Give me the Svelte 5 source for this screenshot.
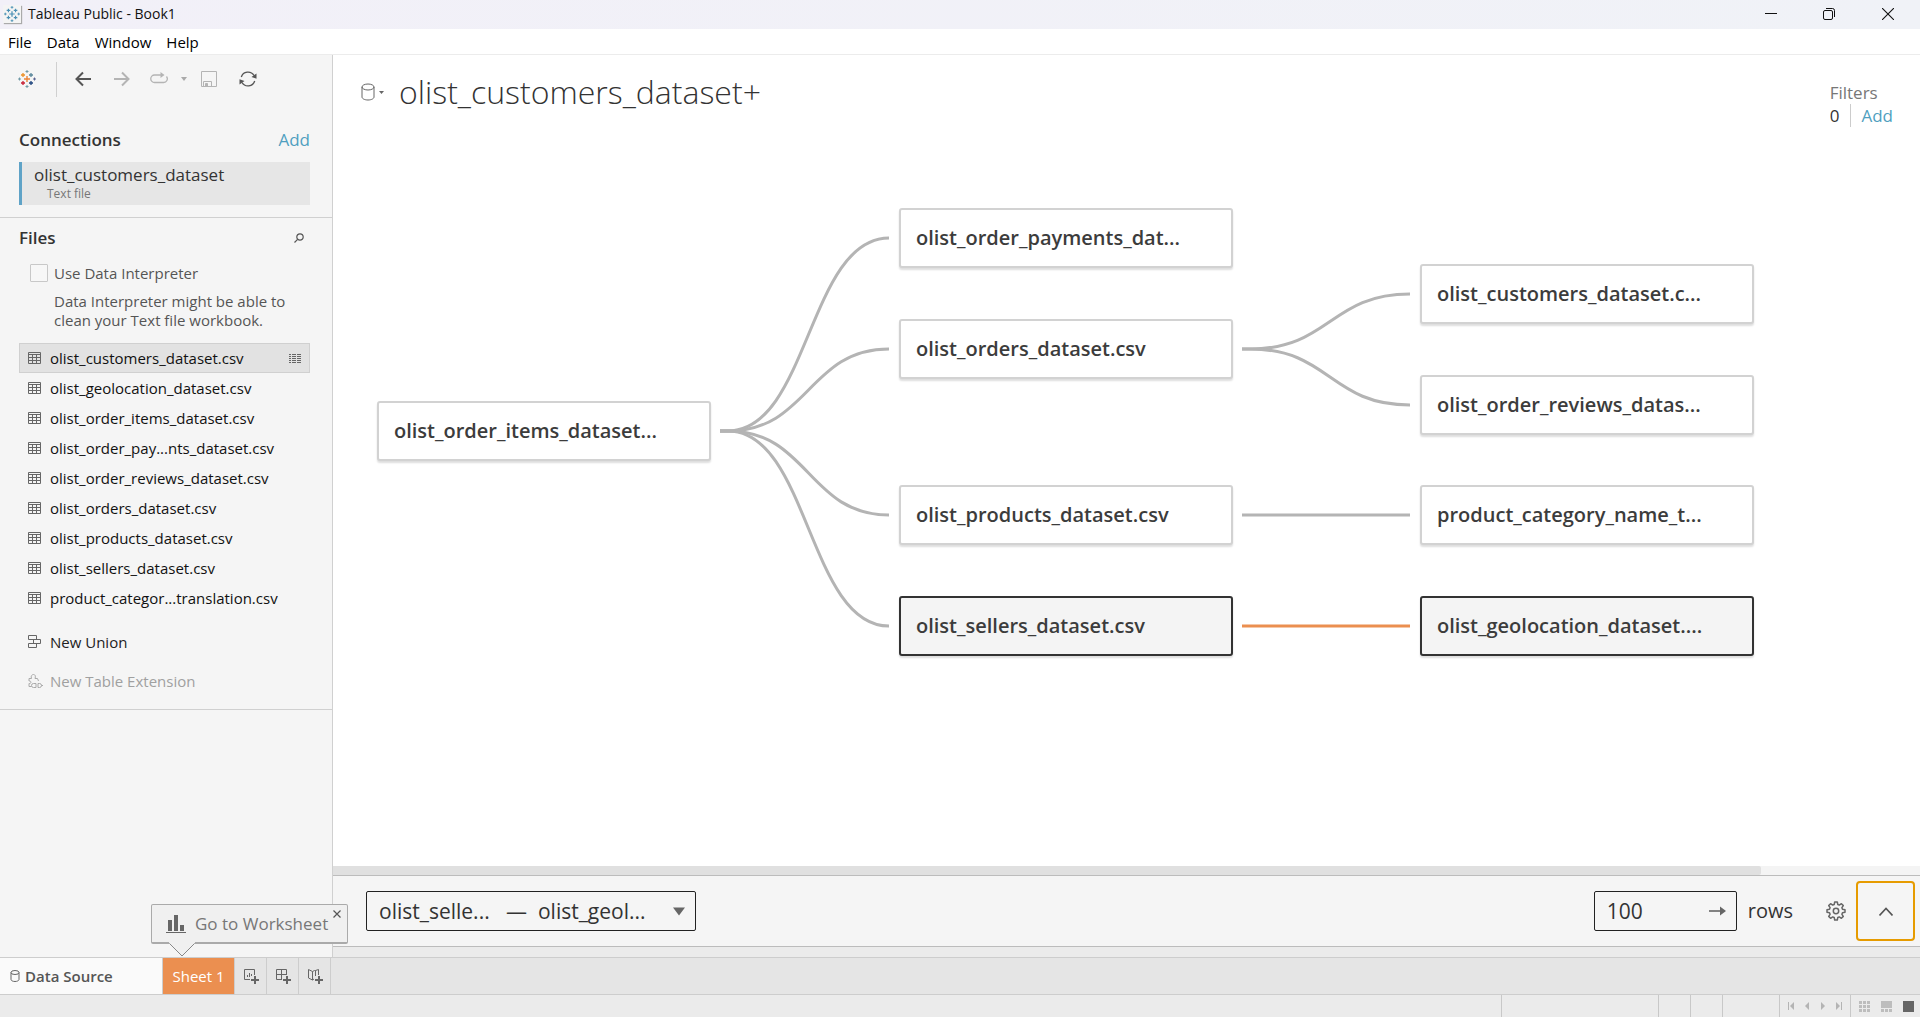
<script>
  const files = [
    'olist_customers_dataset.csv',
    'olist_geolocation_dataset.csv',
    'olist_order_items_dataset.csv',
    'olist_order_pay...nts_dataset.csv',
    'olist_order_reviews_dataset.csv',
    'olist_orders_dataset.csv',
    'olist_products_dataset.csv',
    'olist_sellers_dataset.csv',
    'product_categor...translation.csv'
  ];

  // Node positions on the relationship canvas; every node is 334 x 60.
  const W = 334;
  const H = 60;
  const nodes = [
    { id: 'items', label: 'olist_order_items_dataset...', x: 44, y: 261 },
    { id: 'payments', label: 'olist_order_payments_dat...', x: 566, y: 68 },
    { id: 'orders', label: 'olist_orders_dataset.csv', x: 566, y: 179 },
    { id: 'products', label: 'olist_products_dataset.csv', x: 566, y: 345 },
    { id: 'sellers', label: 'olist_sellers_dataset.csv', x: 566, y: 456, selected: true },
    { id: 'customers', label: 'olist_customers_dataset.c...', x: 1087, y: 124 },
    { id: 'reviews', label: 'olist_order_reviews_datas...', x: 1087, y: 235 },
    { id: 'category', label: 'product_category_name_t...', x: 1087, y: 345 },
    { id: 'geo', label: 'olist_geolocation_dataset....', x: 1087, y: 456, selected: true }
  ];
  const links = [
    ['items', 'payments'],
    ['items', 'orders'],
    ['items', 'products'],
    ['items', 'sellers'],
    ['orders', 'customers'],
    ['orders', 'reviews'],
    ['products', 'category'],
    ['sellers', 'geo', true]
  ];
  const find = (id) => nodes.find((n) => n.id === id);
  function curve(from, to) {
    const a = find(from);
    const b = find(to);
    const x1 = a.x + W + 9;
    const y1 = a.y + H / 2;
    const x2 = b.x - 10;
    const y2 = b.y + H / 2;
    const mid = (x1 + 8 + x2) / 2;
    return `M${x1} ${y1}H${x1 + 8}C${mid} ${y1} ${mid} ${y2} ${x2} ${y2}`;
  }
  let rows = $state('100');
  let interpreter = $state(false);
</script>

{#snippet logo(mono)}
  <svg class="logo" class:mono width="18" height="18" viewBox="0 0 18 18" fill="none" aria-hidden="true">
    <path d="M9 6v6M6 9h6" stroke="#eb8438" stroke-width="1.4" />
    <path d="M5 3v4M3 5h4" stroke="#eb9129" stroke-width="1.3" />
    <path d="M13 3v4M11 5h4" stroke="#59879b" stroke-width="1.3" />
    <path d="M5 11v4M3 13h4" stroke="#c72035" stroke-width="1.3" />
    <path d="M13 11v4M11 13h4" stroke="#1f457e" stroke-width="1.3" />
    <path d="M9 0v3M7.500 1.500h3M9 15v3M7.500 16.500h3" stroke="#7199a6" />
    <path d="M1.500 7.500v3M0 9h3" stroke="#7199a6" />
    <path d="M16.500 7.500v3M15 9h3" stroke="#5b6591" />
  </svg>
{/snippet}

{#snippet plus()}
  <path d="M12 8v8M8 12h8" stroke="#666" stroke-width="2" />
{/snippet}

<div class="app">
  <header class="titlebar">
    <span class="app-icon">{@render logo(true)}</span>
    <span class="title">Tableau Public - Book1</span>
    <div class="window-buttons">
      <button aria-label="Minimize"><svg width="12" height="12" viewBox="0 0 12 12"><path d="M0 5.500h12" stroke="#111" /></svg></button>
      <button aria-label="Restore">
        <svg width="12" height="12" viewBox="0 0 12 12" fill="none" stroke="#111">
          <rect x=".5" y="2.500" width="9" height="9" rx="1.500" />
          <path d="M3 .5h6.500a2 2 0 0 1 2 2V9" />
        </svg>
      </button>
      <button aria-label="Close"><svg width="12" height="12" viewBox="0 0 12 12"><path d="M0 0l12 12M12 0L0 12" stroke="#111" stroke-width="1.100" /></svg></button>
    </div>
  </header>
  <nav class="menubar">
    <button>File</button>
    <button>Data</button>
    <button>Window</button>
    <button>Help</button>
  </nav>

  <div class="body">
    <aside>
      <div class="tools">
        <button class="start" aria-label="Start page">{@render logo(false)}</button>
        <span class="rule"></span>
        <button aria-label="Undo"><svg width="16" height="16" viewBox="0 0 16 16" fill="none" stroke="#555" stroke-width="2"><path d="M16 8H1.500M8 1.500L1.500 8 8 14.500" /></svg></button>
        <button aria-label="Redo"><svg width="16" height="16" viewBox="0 0 16 16" fill="none" stroke="#b4b4b4" stroke-width="2"><path d="M0 8h14.500M8 1.500L14.500 8 8 14.500" /></svg></button>
        <button class="replay" aria-label="Replay">
          <svg width="18" height="16" viewBox="0 0 18 16" fill="none" stroke="#b4b4b4" stroke-width="1.300"><path d="M11 4H4.500a3.700 3.700 0 0 0 0 7.500h9a3.700 3.700 0 0 0 3-6" /><path d="M10.500 1l4 3-4 3z" fill="#b4b4b4" stroke="none" /></svg>
        </button>
        <button class="more" aria-label="Replay options"><svg width="6" height="4" viewBox="0 0 6 4"><path d="M0 0h6L3 4z" fill="#aaa" /></svg></button>
        <button class="save" aria-label="Save">
          <svg width="16" height="16" viewBox="0 0 16 16" fill="none" stroke="#b4b4b4"><path d="M.5.5h15v15H.5zM2.500 15.500v-5h8v5" /><path d="M4.500 15.500v-3h2v3z" fill="#b4b4b4" /></svg>
        </button>
        <button class="refresh" aria-label="Refresh">
          <svg width="18" height="16" viewBox="0 0 18 16" fill="none" stroke="#555" stroke-width="1.300"><path d="M2.300 6A7 7 0 0 1 15 4.500M15.700 10A7 7 0 0 1 3 11.500" /><path d="M17.500 2.500v5.200l-5-1.700zM.5 13.500V8.300l5 1.700z" fill="#555" stroke="none" /></svg>
        </button>
      </div>

      <section class="connections">
        <div class="head"><h2>Connections</h2><a href="#add-connection">Add</a></div>
        <button class="connection"><span>olist_customers_dataset</span><small>Text file</small></button>
      </section>

      <section class="files">
        <div class="head">
          <h2>Files</h2>
          <button class="search" aria-label="Search files"><svg width="10" height="10" viewBox="0 0 10 10" fill="none" stroke="#555" stroke-width="1.200"><circle cx="6" cy="4" r="3.200" /><path d="M3.600 6.300L.5 9.500" /></svg></button>
        </div>
        <label class="interpreter"><input type="checkbox" bind:checked={interpreter} />Use Data Interpreter</label>
        <p>Data Interpreter might be able to clean your Text file workbook.</p>
        <ul>
          {#each files as file, i}
            <li>
              <button class="file" class:active={i === 0}>
                <svg width="13" height="12" viewBox="0 0 13 12" fill="none" stroke="#666"><path d="M.5.5h12v11H.5zM.5 2.500h12M.5 5.500h12M.5 8.500h12M4.500 2.500v9M8.500 2.500v9" /></svg>
                <span>{file}</span>
                {#if i === 0}
                  <svg class="details" width="12" height="9" viewBox="0 0 12 9" stroke="#666"><path d="M0 .5h12M0 2.500h12M0 4.500h12M0 6.500h12M0 8.500h12" stroke-dasharray="2 1 4 1 4 1" /></svg>
                {/if}
              </button>
            </li>
          {/each}
        </ul>
        <button class="extra">
          <svg width="15" height="14" viewBox="0 0 15 14" fill="none" stroke="#666"><path d="M.5.5h8v4h-8zM5.500 4.500h7v4h-7zM.5 8.500h8v4h-8z" /></svg>
          New Union
        </button>
        <button class="extra" disabled>
          <svg width="15" height="14" viewBox="0 0 15 14" fill="none" stroke="#aaa"><path d="M1 12.500V9.500c2.500.5 2.500-3 0-2.500V4.500h2.500C2.500 2 4 .5 5.500.5S8 2 7 4.500h2.500l1 2.500M1 12.500h2.500" /><path d="M5.500 9.500H8v4H5.500a2 2 0 0 1 0-4zM10 9.500h1.500a2 2 0 0 1 0 4H10zM13.500 11.500H15" /></svg>
          New Table Extension
        </button>
      </section>
    </aside>

    <main>
      <div class="main-head">
        <button class="source" aria-label="Data source options">
          <svg width="14" height="18" viewBox="0 0 14 18" fill="none" stroke="#666"><ellipse cx="7" cy="4" rx="6" ry="3" /><path d="M1 4v10c0 1.700 2.700 3 6 3s6-1.300 6-3V4" /></svg>
          <svg width="5" height="3" viewBox="0 0 5 3"><path d="M0 0h5L2.500 3z" fill="#666" /></svg>
        </button>
        <h1>olist_customers_dataset+</h1>
        <div class="filters">
          <span>Filters</span>
          <div><b>0</b><a href="#add-filter">Add</a></div>
        </div>
      </div>

      <div class="canvas">
        <svg class="links" fill="none" aria-hidden="true">
          {#each links as [from, to, on]}
            <path class:on d={curve(from, to)} />
          {/each}
        </svg>
        {#each nodes as n}
          <button class="node" class:selected={n.selected} style:left="{n.x}px" style:top="{n.y}px">{n.label}</button>
        {/each}
      </div>
      <div class="scroll"><div></div></div>

      <div class="databar">
        <div class="picker">
          <select aria-label="Relationship">
            <option>olist_selle... &nbsp; — &nbsp;olist_geol...</option>
          </select>
          <svg width="12" height="9" viewBox="0 0 12 9" aria-hidden="true"><path d="M0 .5h12L6 8.500z" fill="#666" /></svg>
        </div>
        <div class="rows">
          <input id="row-count" type="text" bind:value={rows} />
          <button aria-label="Load rows"><svg width="17" height="10" viewBox="0 0 17 10"><path d="M0 5h12" stroke="#666" stroke-width="1.600" /><path d="M11 .5L17 5l-6 4.500z" fill="#666" /></svg></button>
        </div>
        <label for="row-count">rows</label>
        <button class="gear" aria-label="Settings">
          <svg width="20" height="20" viewBox="0 0 20 20" fill="none" stroke="#666" stroke-width="1.500" stroke-linejoin="round">
            <path d="M8.700 1h2.600l.5 2.500 1.500.6 2.100-1.400 1.900 1.900-1.400 2.100.6 1.500 2.500.5v2.600l-2.500.5-.6 1.500 1.400 2.100-1.900 1.900-2.100-1.400-1.500.6-.5 2.500H8.700l-.5-2.500-1.500-.6-2.100 1.400-1.900-1.900 1.400-2.100-.6-1.500L1 11.300V8.700l2.500-.5.6-1.500-1.400-2.100 1.900-1.900 2.100 1.400 1.500-.6z" />
            <circle cx="10" cy="10" r="2.700" />
          </svg>
        </button>
        <button class="expand" aria-label="Show data"><svg width="14" height="9" viewBox="0 0 14 9" fill="none" stroke="#555" stroke-width="1.600"><path d="M.5 8.500L7 1.500l6.500 7" /></svg></button>
      </div>
      <div class="gutter"></div>
    </main>
  </div>

  <div class="tabs">
    <button class="data-source">
      <svg width="10" height="12" viewBox="0 0 10 12" fill="none" stroke="#666"><ellipse cx="5" cy="2.500" rx="4" ry="2" /><path d="M1 2.500v7c0 1 1.800 2 4 2s4-1 4-2v-7" /></svg>
      Data Source
    </button>
    <div class="sheet">
      <button class="sheet-tab">Sheet 1</button>
      <div class="callout">
        <button class="go">
          <svg width="20" height="18" viewBox="0 0 20 18" fill="#666" aria-hidden="true"><path d="M2 5h4v11H2zM8 0h4v16H8zM14 10h4v6h-4zM0 17h20v1H0z" /></svg>
          Go to Worksheet
        </button>
        <button class="dismiss" aria-label="Dismiss"><svg width="8" height="8" viewBox="0 0 8 8"><path d="M.5.5l7 7M7.500.5l-7 7" stroke="#555" stroke-width="1.200" /></svg></button>
        <svg class="tail" width="26" height="15" viewBox="0 0 26 15" aria-hidden="true"><path d="M0 0h26v1L13 14 0 1z" fill="#f0f0f0" /><path d="M.5 1.500L13 14 25.500 1.500" fill="none" stroke="#888" /></svg>
      </div>
    </div>
    <button class="new" aria-label="New worksheet"><svg width="16" height="16" viewBox="0 0 16 16" fill="none" stroke="#666"><path d="M7 11.500H1.500V1.500h10V7M4.500 9V7M6.500 9V5M8.500 8V6" />{@render plus()}</svg></button>
    <button class="new" aria-label="New dashboard"><svg width="16" height="16" viewBox="0 0 16 16" fill="none" stroke="#666"><path d="M7 11.500H1.500V1.500h10V7M1.500 6.500h10M6.500 1.500v10" />{@render plus()}</svg></button>
    <button class="new" aria-label="New story"><svg width="16" height="16" viewBox="0 0 16 16" fill="none" stroke="#666"><path d="M7 11l-1.500 1-4-2V1.500l4 2V12M5.500 3.500l2-1h1l3-1V7M8.500 2.500V8" />{@render plus()}</svg></button>
  </div>

  <footer>
    <span class="cell message"></span>
    <span class="cell info"></span>
    <span class="cell"></span>
    <span class="cell"></span>
    <span class="cell wide"></span>
    <div class="pager">
      <button aria-label="First"><svg width="8" height="8" viewBox="0 0 8 8" fill="#b4b4b4"><path d="M1 0h1v8H1zM7 0v8L3 4z" /></svg></button>
      <button aria-label="Previous"><svg width="8" height="8" viewBox="0 0 8 8" fill="#b4b4b4"><path d="M6 0v8L2 4z" /></svg></button>
      <button aria-label="Next"><svg width="8" height="8" viewBox="0 0 8 8" fill="#b4b4b4"><path d="M2 0v8l4-4z" /></svg></button>
      <button aria-label="Last"><svg width="8" height="8" viewBox="0 0 8 8" fill="#b4b4b4"><path d="M6 0h1v8H6zM1 0v8l4-4z" /></svg></button>
    </div>
    <div class="views">
      <button aria-label="Sheet sorter"><svg width="11" height="11" viewBox="0 0 11 11" fill="#bdbdbd"><path d="M0 0h3v3H0zM4 0h3v3H4zM8 0h3v3H8zM0 4h3v3H0zM4 4h3v3H4zM8 4h3v3H8zM0 8h3v3H0zM4 8h3v3H4zM8 8h3v3H8z" /></svg></button>
      <button aria-label="Filmstrip"><svg width="11" height="11" viewBox="0 0 11 11" fill="#bdbdbd"><path d="M0 0h11v7H0zM0 8h3v3H0zM4 8h3v3H4zM8 8h3v3H8z" /></svg></button>
      <button aria-label="Tabs"><svg width="11" height="11" viewBox="0 0 11 11" fill="#666"><path d="M0 0h11v11H0z" /></svg></button>
    </div>
  </footer>
</div>

<style>
  :global(body) {
    margin: 0;
  }
  .app {
    display: flex;
    flex-direction: column;
    height: 100vh;
    color: #333;
    background: #fff;
    font: 15px/20px 'Open Sans', 'Noto Sans', sans-serif;
  }
  * {
    box-sizing: border-box;
  }
  svg {
    display: block;
    flex: none;
  }
  button,
  input,
  select {
    margin: 0;
    padding: 0;
    border: 0;
    background: none;
    color: inherit;
    font: inherit;
    text-align: left;
  }
  a {
    color: #4f9fc0;
    text-decoration: none;
  }
  h1,
  h2,
  p,
  ul {
    margin: 0;
    padding: 0;
    list-style: none;
  }
  h2 {
    font-size: 17px;
    font-weight: 600;
  }

  .titlebar {
    display: flex;
    align-items: center;
    height: 29px;
    padding: 0 2px 1px 3px;
    background: linear-gradient(90deg, #f2f0f8, #f0f2f7);
    color: #111;
    font-size: 14px;
  }
  .app-icon {
    display: grid;
    place-items: center;
    width: 18px;
    height: 18px;
    margin-right: 7px;
    background: #f4f4f4;
    box-shadow: 1px 1px 1px #aaa;
  }
  .mono {
    width: 16px;
    height: 16px;
  }
  .mono path {
    stroke: #4a90b5;
  }
  .window-buttons {
    display: flex;
    margin-left: auto;
  }
  .window-buttons button {
    display: grid;
    place-items: center;
    width: 58px;
    height: 28px;
  }
  .window-buttons button:last-child {
    width: 60px;
  }
  .menubar {
    display: flex;
    gap: 15px;
    height: 26px;
    padding: 1px 8px 0;
    border-bottom: 1px solid #ececec;
    color: #000;
    font-size: 15px;
  }

  .body {
    display: flex;
    flex: 1;
    min-height: 0;
  }
  aside {
    flex: none;
    width: 333px;
    border-right: 1px solid #d0d0d0;
    background: #f5f5f5;
  }
  .tools {
    display: flex;
    align-items: center;
    height: 48px;
    padding-left: 18px;
  }
  .rule {
    width: 1px;
    height: 35px;
    margin: 0 18px 0 20px;
    background: #d0d0d0;
  }
  .tools .rule + button {
    margin-right: 23px;
  }
  .replay {
    margin: 0 13px 0 20px;
  }
  .save {
    margin: 0 22px 0 14px;
  }
  .head {
    display: flex;
    align-items: center;
    justify-content: space-between;
  }
  .head a {
    font-size: 17px;
  }
  .connections {
    padding: 27px 22px 12px 19px;
    border-bottom: 1px solid #d0d0d0;
  }
  .connection {
    display: block;
    width: 100%;
    height: 43px;
    margin-top: 12px;
    padding: 1px 0 0 12px;
    border-left: 3px solid #5fa3c7;
    background: #e6e6e6;
    font-size: 17px;
  }
  .connection span,
  .connection small {
    display: block;
  }
  .connection small {
    padding-left: 13px;
    color: #777;
    font-size: 12px;
    line-height: 18px;
  }
  .files {
    padding: 10px 22px 18px 19px;
    border-bottom: 1px solid #d0d0d0;
  }
  .search {
    margin-right: 6px;
  }
  .interpreter {
    display: flex;
    align-items: center;
    gap: 6px;
    margin-top: 15px;
    padding-left: 11px;
    color: #555;
  }
  .interpreter input {
    appearance: none;
    width: 18px;
    height: 18px;
    border: 1px solid #c8c8c8;
    border-radius: 1px;
    background: #f7f7f7;
  }
  .interpreter input:checked {
    background: #5fa3c7;
  }
  .files p {
    width: 280px;
    padding-left: 35px;
    margin: 9px 0 13px;
    color: #555;
    line-height: 19px;
  }
  .file {
    display: flex;
    align-items: center;
    gap: 9px;
    width: 100%;
    height: 30px;
    padding: 0 8px;
    border: 1px solid transparent;
    color: #111;
  }
  .file.active {
    border-color: #d0d0d0;
    background: #e2e2e2;
  }
  .details {
    margin-left: auto;
  }
  .extra {
    display: flex;
    align-items: center;
    gap: 7px;
    height: 20px;
    margin-top: 19px;
    padding-left: 9px;
    color: #222;
  }
  .extra:disabled {
    color: #a0a0a0;
  }

  main {
    display: flex;
    flex: 1;
    flex-direction: column;
    min-width: 0;
  }
  .main-head {
    display: flex;
    align-items: flex-start;
    height: 85px;
    padding: 18px 27px 0 28px;
  }
  .source {
    display: flex;
    align-items: center;
    gap: 4px;
    height: 38px;
    margin-right: 15px;
  }
  h1 {
    font-size: 32px;
    font-weight: 300;
    line-height: 38px;
  }
  .filters {
    margin: 8px 0 0 auto;
    color: #777;
    font-size: 17px;
    line-height: 23px;
  }
  .filters div {
    display: flex;
  }
  .filters b {
    padding-right: 11px;
    margin-right: 10px;
    border-right: 1px solid #ccc;
    color: #333;
    font-weight: 400;
  }
  .canvas {
    position: relative;
    flex: 1;
    min-height: 0;
    overflow: hidden;
  }
  .links {
    position: absolute;
    inset: 0;
    width: 100%;
    height: 100%;
  }
  .links path {
    stroke: #b4b4b4;
    stroke-width: 3;
  }
  .links .on {
    stroke: #eb8f50;
  }
  .node {
    position: absolute;
    width: 334px;
    height: 60px;
    padding: 0 15px;
    border: 2px solid #d2d2d2;
    border-radius: 3px;
    background: #fff;
    box-shadow: 0 2px 2px #0002;
    color: #3c3c3c;
    font-size: 20px;
    font-weight: 600;
    white-space: nowrap;
  }
  .node.selected {
    border-color: #333;
    background: #f4f4f4;
  }
  .scroll {
    height: 9px;
    background: #f4f4f4;
  }
  .scroll div {
    width: 90%;
    height: 9px;
    border-radius: 0 2px 2px 0;
    background: #e0e0e0;
  }
  .databar {
    display: flex;
    align-items: center;
    height: 72px;
    padding: 0 5px 0 33px;
    border: 1px solid #bcbcbc;
    border-width: 1px 0;
    background: #f5f5f5;
    font-size: 20px;
  }
  .picker,
  .rows {
    display: flex;
    align-items: center;
    height: 40px;
    border: 1px solid #222;
    border-radius: 2px;
    font-size: 21px;
  }
  .picker {
    position: relative;
    width: 330px;
  }
  .picker select {
    appearance: none;
    width: 100%;
    height: 38px;
    padding: 0 12px;
    line-height: 32px;
  }
  .picker svg {
    position: absolute;
    right: 10px;
    pointer-events: none;
  }
  .rows {
    width: 143px;
    margin-left: auto;
    padding: 0 10px 0 12px;
  }
  .rows input {
    flex: 1;
    min-width: 0;
    height: 38px;
  }
  .databar label {
    margin: 0 33px 0 11px;
  }
  .gear {
    margin-right: 10px;
  }
  .expand {
    display: grid;
    place-items: center;
    width: 59px;
    height: 60px;
    border: 2px solid #e69b00;
    border-radius: 4px;
  }
  .gutter {
    height: 10px;
    background: #ebebeb;
  }

  .tabs {
    display: flex;
    height: 38px;
    border: 1px solid #cdcdcd;
    border-width: 1px 0;
    background: #e5e5e5;
  }
  .data-source {
    display: flex;
    align-items: center;
    gap: 5px;
    width: 162px;
    padding-left: 10px;
    background: #fafafa;
    color: #555;
    font-weight: 600;
  }
  .sheet {
    position: relative;
    border: 1px solid #cdcdcd;
    border-width: 0 1px;
  }
  .sheet-tab {
    width: 71px;
    height: 36px;
    background: #eb8f50;
    color: #fff;
    text-align: center;
  }
  .new {
    display: grid;
    place-items: center;
    width: 32px;
    border-right: 1px solid #cdcdcd;
  }
  .callout {
    position: absolute;
    right: -114px;
    bottom: 50px;
    display: flex;
    width: 197px;
    height: 40px;
    border: 1px solid #aaa;
    border-bottom-width: 2px;
    border-radius: 2px;
    background: #f0f0f0;
    color: #777;
    font-size: 17px;
  }
  .go {
    display: flex;
    align-items: center;
    gap: 9px;
    padding-left: 14px;
    white-space: nowrap;
  }
  .dismiss {
    position: absolute;
    top: 5px;
    right: 6px;
  }
  .tail {
    position: absolute;
    top: 37px;
    left: 17px;
  }

  footer {
    display: flex;
    height: 22px;
    background: #ebebeb;
  }
  .cell {
    width: 32px;
    border-right: 1px solid #c8c8c8;
  }
  .message {
    flex: 1;
  }
  .info {
    width: 157px;
  }
  .wide {
    width: 57px;
  }
  .pager,
  .views {
    display: flex;
    align-items: center;
  }
  .pager {
    gap: 8px;
    width: 71px;
    padding-left: 7px;
    border-right: 1px solid #c8c8c8;
  }
  .views {
    gap: 11px;
    width: 69px;
    padding-left: 8px;
  }
</style>
